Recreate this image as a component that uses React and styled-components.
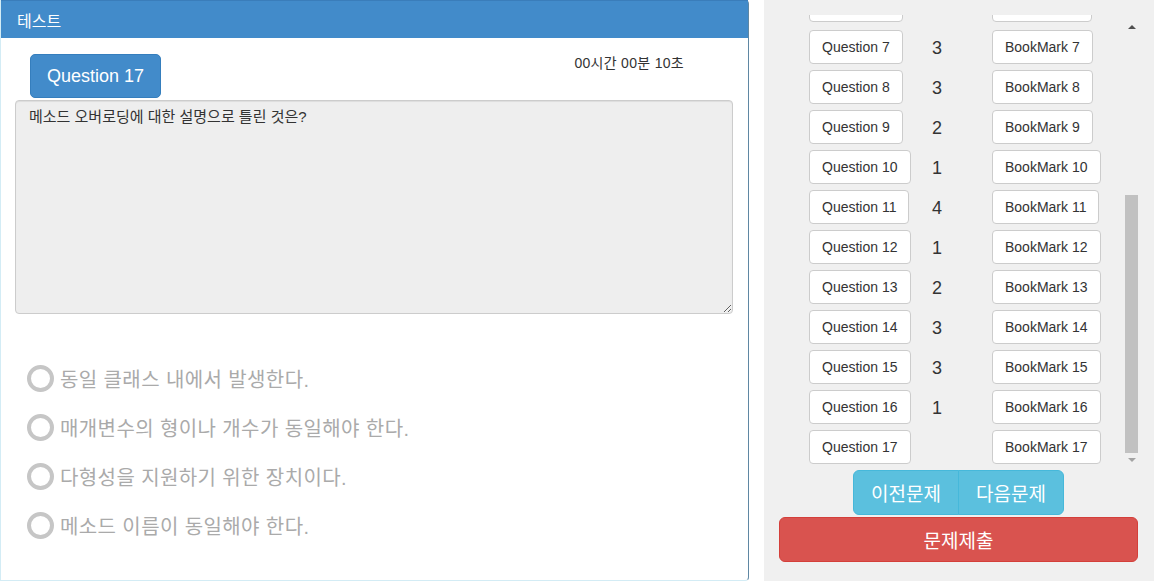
import React from 'react';
import styled, { createGlobalStyle } from 'styled-components';

const GlobalStyle = createGlobalStyle`
  html, body {
    margin: 0;
    padding: 0;
    background: #fff;
    font-family: 'Liberation Sans', 'Noto Sans CJK KR', sans-serif;
    font-size: 14px;
    color: #333;
  }
  * {
    box-sizing: border-box;
  }
`;

const Page = styled.div`
  display: flex;
  height: 581px;
  overflow: hidden;
`;

const TestPanel = styled.section`
  width: 749px;
  height: 581px;
  flex-shrink: 0;
  display: flex;
  flex-direction: column;
  background: #fff;
  border: 1px solid #d3ecf5;
  border-top: none;
  border-right-color: #5f87a3;
  border-radius: 0 4px 4px 0;
`;

const PanelHeading = styled.header`
  height: 38px;
  display: flex;
  align-items: center;
  padding: 0 16px;
  background: #428bca;
  border-top: 1px solid #3a7dba;
  color: #fff;
  font-size: 16px;
`;

const PanelBody = styled.div`
  padding: 15px 14px 0 14px;
`;

const TopRow = styled.div`
  display: flex;
  align-items: flex-start;
`;

const CurrentQuestion = styled.button`
  margin: 1px 0 0 15px;
  padding: 10px 16px;
  line-height: 22px;
  font-size: 18px;
  font-family: inherit;
  color: #fff;
  background: #428bca;
  border: 1px solid #357ebd;
  border-radius: 5px;
`;

const Timer = styled.span`
  margin-left: auto;
  margin-right: 50px;
  line-height: 20px;
  font-size: 14px;
  letter-spacing: 0.3px;
  color: #333;
`;

const QuestionText = styled.textarea`
  display: block;
  width: 718px;
  height: 214px;
  margin-top: 2px;
  padding: 7px 13px;
  font-family: inherit;
  font-size: 15px;
  line-height: 18px;
  color: #333;
  background: #eee;
  border: 1px solid #ccc;
  border-radius: 4px;
  box-shadow: inset 0 1px 1px rgba(0, 0, 0, 0.075);
  outline: none;
  resize: vertical;
`;

const Choices = styled.ul`
  list-style: none;
  margin: 51px 0 0;
  padding: 0 0 0 12px;
  display: flex;
  flex-direction: column;
  gap: 22px;
`;

const Choice = styled.li`
  display: flex;
  align-items: center;
  gap: 6px;
  height: 27px;
  font-size: 20px;
  letter-spacing: 0.4px;
  color: #aaa;
`;

const Radio = styled.span`
  width: 27px;
  height: 27px;
  border-radius: 50%;
  border: 4px solid #c6c6c6;
  background: #fff;
  flex-shrink: 0;
`;

const SidePanel = styled.aside`
  flex: 1;
  margin-left: 15px;
  padding: 15px 16px 0 15px;
  background: #f0f0f0;
  display: flex;
  flex-direction: column;
`;

const ScrollArea = styled.div`
  display: flex;
  height: 452px;
`;

const Viewport = styled.div`
  flex: 1;
  overflow: hidden;
  display: flex;
  flex-direction: column;
  justify-content: flex-end;
`;

const QuestionList = styled.div`
  display: grid;
  grid-template-columns: 115px 26px auto;
  row-gap: 6px;
  padding: 0 0 3px 30px;
`;

const ListButton = styled.button`
  justify-self: start;
  height: 34px;
  min-width: ${(p) => p.$minWidth || 0}px;
  padding: 0 12px;
  font-family: inherit;
  font-size: 14px;
  color: #333;
  background: #fff;
  border: 1px solid #ccc;
  border-radius: 4px;
`;

const BookmarkCell = styled.div`
  padding-left: 42px;
`;

const Answer = styled.span`
  display: flex;
  align-items: center;
  justify-content: center;
  padding-top: 3px;
  font-size: 18px;
  color: #333;
`;

const Scrollbar = styled.div`
  width: 13px;
  display: flex;
  flex-direction: column;
`;

const ScrollButton = styled.div`
  height: ${(p) => (p.$up ? '24px' : '14px')};
  display: flex;
  align-items: center;
  justify-content: center;
  &::before {
    content: '';
    border-left: 4px solid transparent;
    border-right: 4px solid transparent;
    border-${(p) => (p.$up ? 'bottom' : 'top')}: 4px solid ${(p) => (p.$up ? '#505050' : '#a3a3a3')};
  }
`;

const Track = styled.div`
  flex: 1;
  display: flex;
  flex-direction: column;
  justify-content: flex-end;
`;

const Thumb = styled.div`
  height: 258px;
  background: #c1c1c1;
`;

const NavGroup = styled.div`
  display: flex;
  justify-content: center;
  margin-top: 3px;
`;

const NavButton = styled.button`
  width: 106px;
  height: 45px;
  font-family: inherit;
  font-size: 19px;
  color: #fff;
  background: #5bc0de;
  border: 1px solid #46b8da;
  border-radius: ${(p) => (p.$first ? '6px 0 0 6px' : '0 6px 6px 0')};
  margin-left: ${(p) => (p.$first ? '0' : '-1px')};
`;

const SubmitButton = styled.button`
  width: 100%;
  height: 45px;
  margin-top: 2px;
  font-family: inherit;
  font-size: 19px;
  color: #fff;
  background: #d9534f;
  border: 1px solid #d43f3a;
  border-radius: 6px;
`;

const choices = [
  '동일 클래스 내에서 발생한다.',
  '매개변수의 형이나 개수가 동일해야 한다.',
  '다형성을 지원하기 위한 장치이다.',
  '메소드 이름이 동일해야 한다.',
];

// questions 7..17 are in view, the list is scrolled to its end
const rows = [
  [7, 3],
  [8, 3],
  [9, 2],
  [10, 1],
  [11, 4],
  [12, 1],
  [13, 2],
  [14, 3],
  [15, 3],
  [16, 1],
  [17, ''],
];

export default function App() {
  return (
    <Page>
      <GlobalStyle />
      <TestPanel>
        <PanelHeading>테스트</PanelHeading>
        <PanelBody>
          <TopRow>
            <CurrentQuestion>Question 17</CurrentQuestion>
            <Timer>00시간 00분 10초</Timer>
          </TopRow>
          <QuestionText readOnly value="메소드 오버로딩에 대한 설명으로 틀린 것은?" />
          <Choices>
            {choices.map((c) => (
              <Choice key={c}>
                <Radio />
                {c}
              </Choice>
            ))}
          </Choices>
        </PanelBody>
      </TestPanel>

      <SidePanel>
        <ScrollArea>
          <Viewport>
            <QuestionList>
              {/* row scrolled mostly out of view: only its lower edge shows */}
              <ListButton $minWidth={94} aria-label="Question 6" />
              <Answer />
              <BookmarkCell>
                <ListButton $minWidth={100} aria-label="BookMark 6" />
              </BookmarkCell>
              {rows.map(([n, a]) => (
                <React.Fragment key={n}>
                  <ListButton>Question {n}</ListButton>
                  <Answer>{a}</Answer>
                  <BookmarkCell>
                    <ListButton>BookMark {n}</ListButton>
                  </BookmarkCell>
                </React.Fragment>
              ))}
            </QuestionList>
          </Viewport>
          <Scrollbar>
            <ScrollButton $up />
            <Track>
              <Thumb />
            </Track>
            <ScrollButton />
          </Scrollbar>
        </ScrollArea>
        <NavGroup>
          <NavButton $first>이전문제</NavButton>
          <NavButton>다음문제</NavButton>
        </NavGroup>
        <SubmitButton>문제제출</SubmitButton>
      </SidePanel>
    </Page>
  );
}
